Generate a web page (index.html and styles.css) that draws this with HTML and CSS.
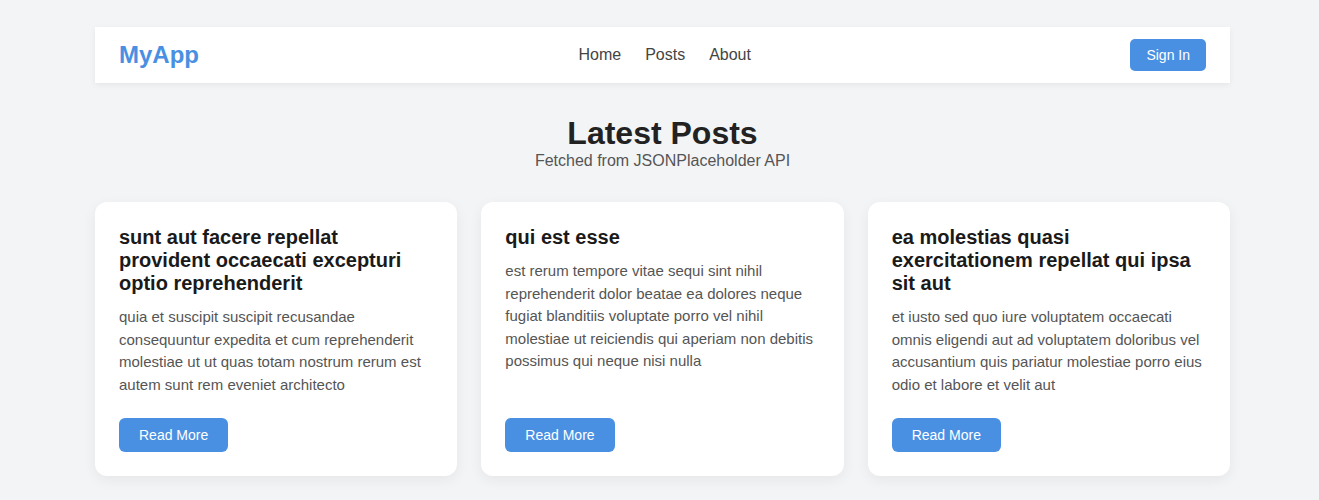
FILE: index.html
```html
<!DOCTYPE html>
<html lang="en">
<head>
<meta charset="utf-8">
<title>MyApp</title>
<link rel="stylesheet" href="styles.css">
</head>
<body>
<div class="page">
  <header class="topbar">
    <a class="logo" href="#">MyApp</a>
    <nav class="nav">
      <a href="#">Home</a>
      <a href="#">Posts</a>
      <a href="#">About</a>
    </nav>
    <button class="btn btn-sm">Sign In</button>
  </header>

  <section class="intro">
    <h1>Latest Posts</h1>
    <p>Fetched from JSONPlaceholder API</p>
  </section>

  <main class="grid">
    <article class="card">
      <h2>sunt aut facere repellat provident occaecati excepturi optio reprehenderit</h2>
      <p>quia et suscipit suscipit recusandae consequuntur expedita et cum reprehenderit molestiae ut ut quas totam nostrum rerum est autem sunt rem eveniet architecto</p>
      <button class="btn">Read More</button>
    </article>
    <article class="card">
      <h2>qui est esse</h2>
      <p>est rerum tempore vitae sequi sint nihil reprehenderit dolor beatae ea dolores neque fugiat blanditiis voluptate porro vel nihil molestiae ut reiciendis qui aperiam non debitis possimus qui neque nisi nulla</p>
      <button class="btn">Read More</button>
    </article>
    <article class="card">
      <h2>ea molestias quasi exercitationem repellat qui ipsa sit aut</h2>
      <p>et iusto sed quo iure voluptatem occaecati omnis eligendi aut ad voluptatem doloribus vel accusantium quis pariatur molestiae porro eius odio et labore et velit aut</p>
      <button class="btn">Read More</button>
    </article>
  </main>
</div>
</body>
</html>
```
FILE: styles.css
```css
* { box-sizing: border-box; }

html, body {
  margin: 0;
  background: #f3f4f6;
  font-family: "Liberation Sans", Arial, sans-serif;
  color: #222;
}

.page {
  max-width: 1141px;
  margin: 0 auto;
  padding: 27px 0 40px 6px;
}

.topbar {
  display: flex;
  align-items: center;
  justify-content: space-between;
  background: #fff;
  padding: 12px 24px;
  box-shadow: 0 2px 6px rgba(0, 0, 0, 0.06);
}

.logo {
  font-size: 24px;
  font-weight: bold;
  color: #4a90e2;
  text-decoration: none;
}

.nav {
  display: flex;
  gap: 24px;
}

.nav a {
  font-size: 16px;
  color: #444;
  text-decoration: none;
}

.btn {
  font-family: inherit;
  font-size: 14px;
  line-height: 16px;
  color: #fff;
  background: #4a90e2;
  border: none;
  border-radius: 6px;
  padding: 9px 20px;
  cursor: pointer;
}

.btn-sm {
  padding: 8px 16px;
  border-radius: 5px;
}

.intro {
  text-align: center;
  padding: 32px 0 32px;
}

.intro h1 {
  margin: 0;
  font-size: 32px;
  font-weight: bold;
  color: #222;
}

.intro p {
  margin: 0;
  font-size: 16px;
  color: #555;
}

.grid {
  display: grid;
  grid-template-columns: repeat(3, 1fr);
  gap: 24px;
}

.card {
  display: flex;
  flex-direction: column;
  align-items: flex-start;
  background: #fff;
  border-radius: 12px;
  padding: 24px 24px 24px;
  box-shadow: 0 4px 14px rgba(0, 0, 0, 0.06);
}

.card h2 {
  margin: 0 0 11px;
  font-size: 20px;
  line-height: 23px;
  font-weight: bold;
  color: #1a1a1a;
}

.card p {
  margin: 0 0 22px;
  font-size: 15px;
  line-height: 1.5;
  color: #555;
}

.card .btn {
  margin-top: auto;
}
```
